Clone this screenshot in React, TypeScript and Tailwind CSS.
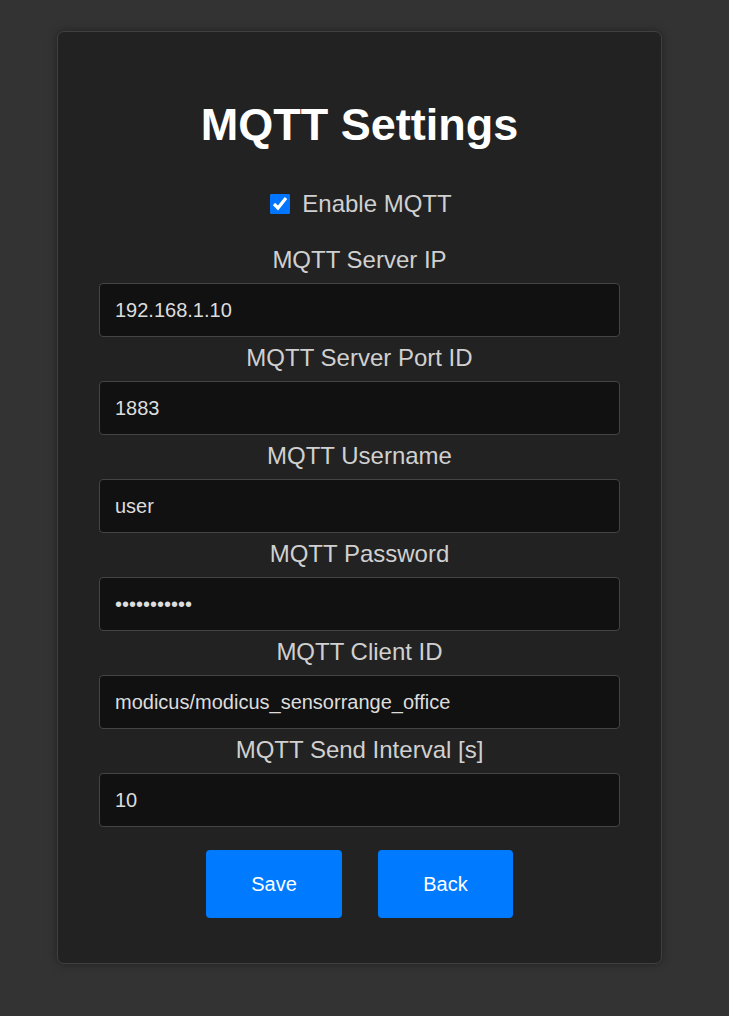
import React from "react";

const fields = [
  { label: "MQTT Server IP", value: "192.168.1.10", type: "text" },
  { label: "MQTT Server Port ID", value: "1883", type: "text" },
  { label: "MQTT Username", value: "user", type: "text" },
  { label: "MQTT Password", value: "secretpass1", type: "password" },
  { label: "MQTT Client ID", value: "modicus/modicus_sensorrange_office", type: "text" },
  { label: "MQTT Send Interval [s]", value: "10", type: "text" },
];

const App = () => (
  <div className="min-h-[1016px] bg-[#333333] pt-[31px] font-['Liberation_Sans',Arial,sans-serif]">
    <div className="ml-[57px] w-[605px] rounded-[7px] border border-[#404040] bg-[#222222] px-[41px] pt-[68px] pb-[45px] shadow-[0_0_10px_rgba(0,0,0,0.35)]">
      <h1 className="text-center text-[45px] leading-[49px] font-bold text-white">
        MQTT Settings
      </h1>
      <label className="mt-[41px] mb-[28px] flex h-[28px] items-center justify-center gap-[12px] pl-[3px] text-[24px] leading-[28px] text-[#d0d0d0]">
        <input
          type="checkbox"
          defaultChecked
          className="m-0 h-[20px] w-[20px] accent-[#0075ff]"
        />
        Enable MQTT
      </label>
      {fields.map((f) => (
        <div key={f.label}>
          <div className="mt-[7px] mb-[9px] h-[28px] text-center text-[24px] leading-[28px] text-[#d0d0d0]">
            {f.label}
          </div>
          <input
            type={f.type}
            defaultValue={f.value}
            className="block h-[54px] w-full rounded-[4px] border border-[#444444] bg-[#111111] px-[15px] text-[20px] text-[#dddddd] outline-none"
          />
        </div>
      ))}
      <div className="mt-[23px] flex justify-center gap-[36px]">
        <button className="h-[68px] w-[136px] rounded-[4px] bg-[#007bff] text-[20px] text-white">
          Save
        </button>
        <button className="h-[68px] w-[135px] rounded-[4px] bg-[#007bff] text-[20px] text-white">
          Back
        </button>
      </div>
    </div>
  </div>
);

export default App;
